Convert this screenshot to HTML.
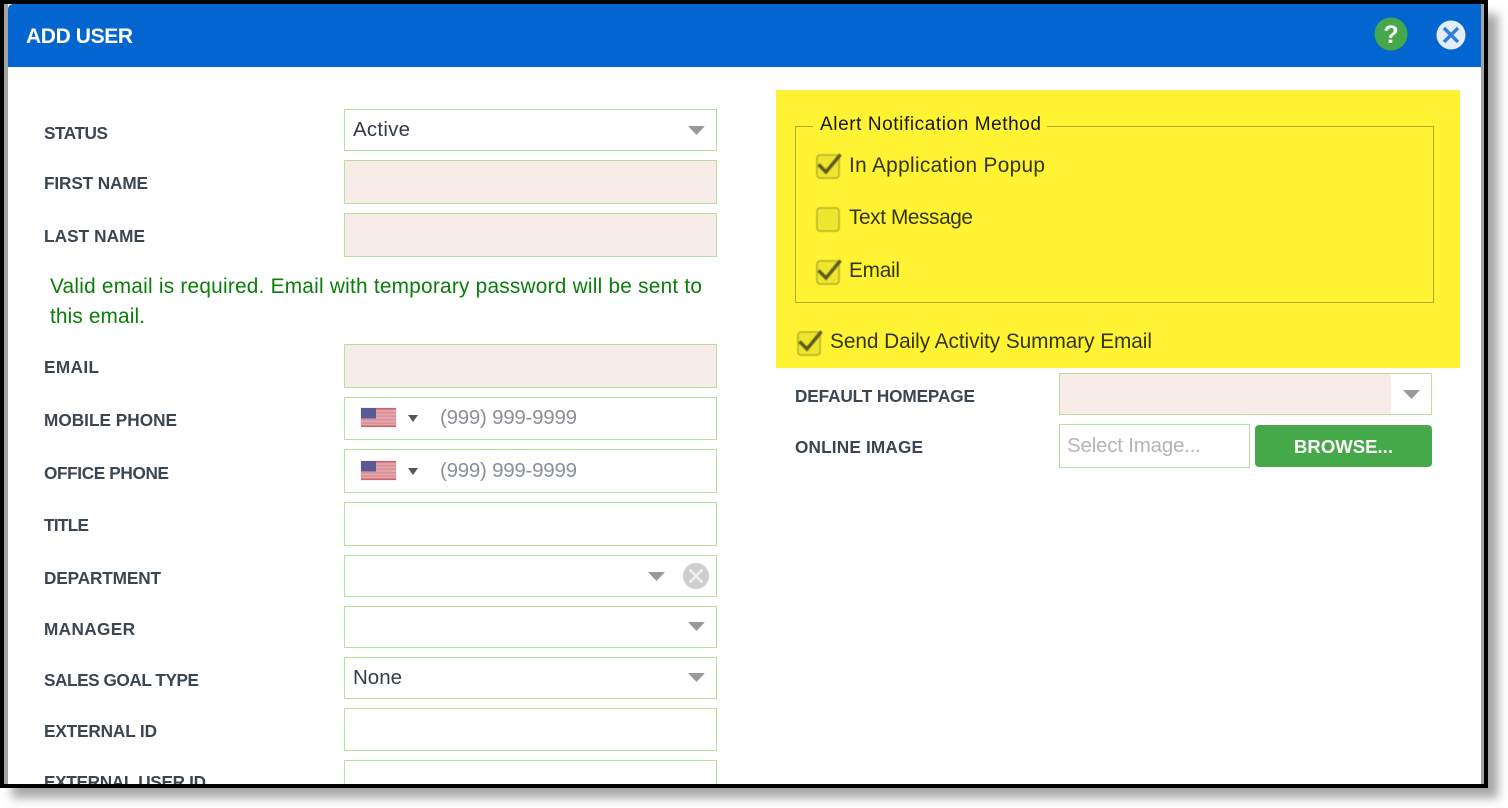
<!DOCTYPE html>
<html>
<head>
<meta charset="utf-8">
<style>
html,body{margin:0;padding:0;background:#fff;width:1508px;height:808px;overflow:hidden}
svg{display:block}
text{font-family:"Liberation Sans",sans-serif}
.l{font-weight:700;font-size:17.2px;fill:#3b4653}
.v{font-size:20.5px;fill:#333c47}
.p{font-size:20.5px;fill:#8b9096}
.g{font-size:20.8px;fill:#0a7d0a}
.y{font-size:20.8px;fill:#33360c}
.f{fill:#fff;stroke:#b6e09c;stroke-width:1}
.r{fill:#f7ece8;stroke:#b6e09c;stroke-width:1}
</style>
</head>
<body>
<svg width="1508" height="808" viewBox="0 0 1508 808" xmlns="http://www.w3.org/2000/svg">
<defs>
<filter id="s" x="-5%" y="-5%" width="110%" height="110%"><feGaussianBlur stdDeviation="5"/></filter>
<filter id="b"><feGaussianBlur stdDeviation="0.6"/></filter>
<filter id="b2" x="-20%" y="-20%" width="140%" height="140%"><feGaussianBlur stdDeviation="0.5"/></filter>
<clipPath id="c"><rect x="0" y="0" width="1488" height="784"/></clipPath>
<g id="flag">
<rect x="0" y="0" width="37" height="21" fill="#f6f2f2"/>
<rect x="1" y="1" width="35" height="19" fill="#e3a5aa"/>
<rect x="1" y="1" width="35" height="1.6" fill="#cb6570"/>
<rect x="1" y="5" width="35" height="1.4" fill="#d98f96"/>
<rect x="1" y="8.5" width="35" height="1.4" fill="#d98f96"/>
<rect x="1" y="12" width="35" height="1.4" fill="#d98f96"/>
<rect x="1" y="15.5" width="35" height="1.4" fill="#d98f96"/>
<rect x="1" y="18.4" width="35" height="1.6" fill="#cb6570"/>
<rect x="1" y="1" width="15" height="10.5" fill="#5a5a96"/>
</g>
<g id="box">
<rect x="0" y="0" width="22" height="23" rx="3" fill="#eee62e" stroke="#b5ad2a" stroke-width="1.5" filter="url(#b)"/>
</g>
<g id="chk">
<use href="#box"/>
<path d="M1.5 9.5 L9 17 L23.5 -0.5" fill="none" stroke="#5c5a1e" stroke-width="3.4" filter="url(#b2)"/>
</g>
</defs>

<rect x="12" y="14" width="1486" height="784" fill="#a6a6a6" filter="url(#s)"/>
<rect x="0" y="0" width="1488" height="788" fill="#000"/>
<rect x="4" y="4" width="1480" height="780" fill="#a3a3a3"/>
<rect x="8" y="4" width="1473" height="780" fill="#fff"/>
<path d="M8 67 V10 Q8 4 14 4 H1481 V67 Z" fill="#0366d0"/>

<text x="26" y="43" font-size="21" font-weight="700" fill="#fff" textLength="107">ADD USER</text>
<circle cx="1391" cy="34" r="16.5" fill="#45a849"/>
<text x="1391" y="43" font-size="25" font-weight="700" fill="#fff" text-anchor="middle">?</text>
<circle cx="1451" cy="35" r="14.5" fill="#e3eefa"/>
<path d="M1444 28 L1458 42 M1458 28 L1444 42" stroke="#2f80d6" stroke-width="3.4" fill="none"/>

<g clip-path="url(#c)">
<text class="l" x="44" y="139" textLength="64">STATUS</text>
<text class="l" x="44" y="189" textLength="104">FIRST NAME</text>
<text class="l" x="44" y="242" textLength="101">LAST NAME</text>
<text class="l" x="44" y="373" textLength="55">EMAIL</text>
<text class="l" x="44" y="426" textLength="133">MOBILE PHONE</text>
<text class="l" x="44" y="479" textLength="125">OFFICE PHONE</text>
<text class="l" x="44" y="531" textLength="45">TITLE</text>
<text class="l" x="44" y="584" textLength="117">DEPARTMENT</text>
<text class="l" x="44" y="635" textLength="91">MANAGER</text>
<text class="l" x="44" y="686" textLength="155">SALES GOAL TYPE</text>
<text class="l" x="44" y="737" textLength="113">EXTERNAL ID</text>
<text class="l" x="44" y="788" textLength="162">EXTERNAL USER ID</text>
</g>

<rect class="f" x="344.5" y="109.5" width="372" height="41"/>
<rect class="r" x="344.5" y="160.5" width="372" height="43"/>
<rect class="r" x="344.5" y="213.5" width="372" height="43"/>
<rect class="r" x="344.5" y="344.5" width="372" height="43"/>
<rect class="f" x="344.5" y="397.5" width="372" height="42"/>
<rect class="f" x="344.5" y="449.5" width="372" height="43"/>
<rect class="f" x="344.5" y="502.5" width="372" height="43"/>
<rect class="f" x="344.5" y="555.5" width="372" height="41"/>
<rect class="f" x="344.5" y="606.5" width="372" height="41"/>
<rect class="f" x="344.5" y="657.5" width="372" height="41"/>
<rect class="f" x="344.5" y="708.5" width="372" height="42"/>
<path d="M344.5 784 V760.5 H716.5 V784" fill="#fff" stroke="#b6e09c"/>

<text class="v" x="353" y="136" textLength="57">Active</text>
<text class="v" x="353" y="684" textLength="49">None</text>
<path d="M688 126 H705 L696.5 135 Z" fill="#999"/>
<path d="M688 622 H705 L696.5 631 Z" fill="#999"/>
<path d="M688 673 H705 L696.5 682 Z" fill="#999"/>
<path d="M648 572 H665 L656.5 581 Z" fill="#999"/>
<circle cx="696" cy="576" r="13" fill="#cdcdcd"/>
<path d="M689.5 569.5 L702.5 582.5 M702.5 569.5 L689.5 582.5" stroke="#f2f2f2" stroke-width="2.4"/>

<text class="g" x="50" y="293" textLength="652">Valid email is required. Email with temporary password will be sent to</text>
<text class="g" x="50" y="323" textLength="95">this email.</text>

<use href="#flag" x="360" y="407"/>
<use href="#flag" x="360" y="460"/>
<path d="M408 415 H418 L413 422 Z" fill="#555"/>
<path d="M408 468 H418 L413 475 Z" fill="#555"/>
<text class="p" x="440" y="424" textLength="137">(999) 999-9999</text>
<text class="p" x="440" y="477" textLength="137">(999) 999-9999</text>

<rect x="776" y="90" width="684" height="278" fill="#fff333"/>
<path d="M813 126.5 H795.5 V302.5 H1433.5 V126.5 H1047" fill="none" stroke="#b5ad2a" stroke-width="1"/>
<text x="820" y="130" font-size="19" fill="#15170a" textLength="221">Alert Notification Method</text>
<use href="#chk" x="817" y="155"/>
<use href="#box" x="817" y="208"/>
<use href="#chk" x="817" y="261"/>
<use href="#chk" x="798" y="332"/>
<text class="y" x="849" y="172" textLength="196">In Application Popup</text>
<text class="y" x="849" y="224" textLength="124">Text Message</text>
<text class="y" x="849" y="277" textLength="51">Email</text>
<text class="y" x="830" y="348" textLength="322">Send Daily Activity Summary Email</text>

<text class="l" x="795" y="402" textLength="180">DEFAULT HOMEPAGE</text>
<text class="l" x="795" y="453" textLength="128">ONLINE IMAGE</text>
<rect class="f" x="1059.5" y="373.5" width="372" height="41"/>
<rect x="1060" y="374" width="331" height="40" fill="#f7ece8"/>
<path d="M1403 390 H1420 L1411.5 399 Z" fill="#999"/>
<rect class="f" x="1059.5" y="424.5" width="190" height="43"/>
<text x="1067" y="452" font-size="20.5" fill="#b5b5b5" textLength="134">Select Image...</text>
<rect x="1255" y="425" width="177" height="42" rx="4" fill="#45a849"/>
<text x="1294" y="453" font-size="18.5" font-weight="700" fill="#fff" textLength="99">BROWSE...</text>
</svg>
</body>
</html>
